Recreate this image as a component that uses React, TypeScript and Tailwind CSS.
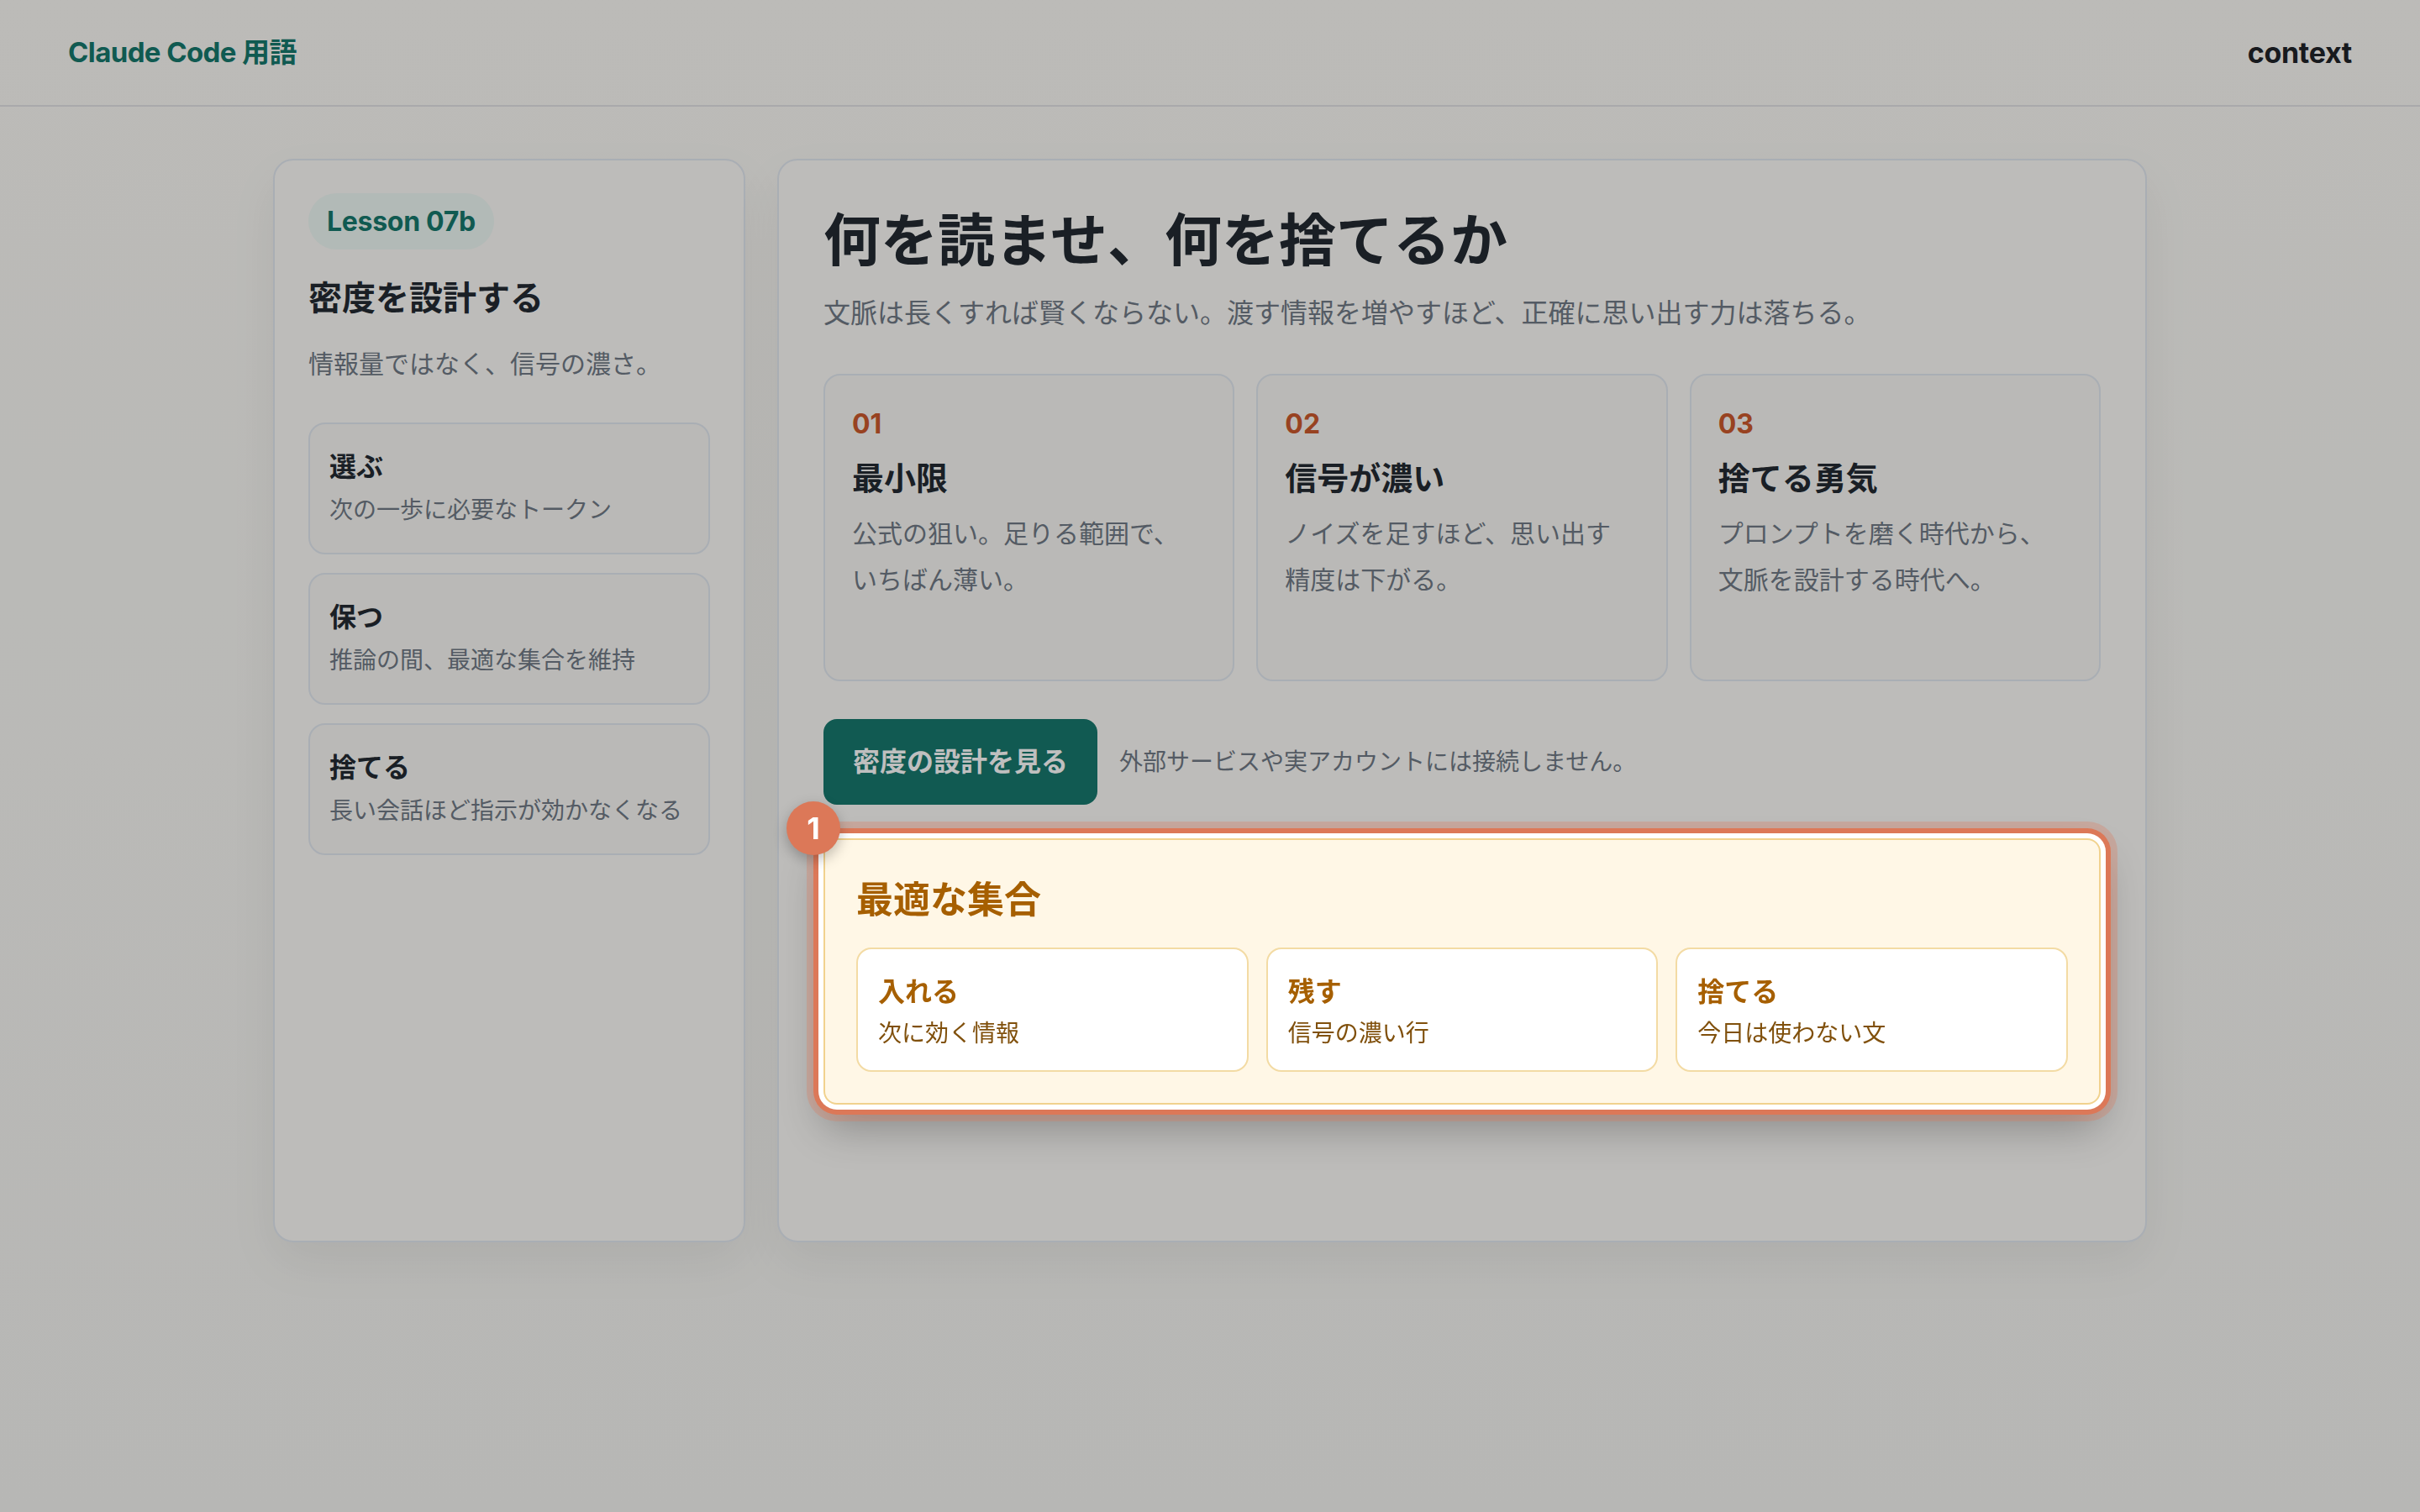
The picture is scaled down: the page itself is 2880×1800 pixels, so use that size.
import React from 'react';

const sideItems = [
  { title: '選ぶ', desc: '次の一歩に必要なトークン' },
  { title: '保つ', desc: '推論の間、最適な集合を維持' },
  { title: '捨てる', desc: '長い会話ほど指示が効かなくなる' },
];

const points = [
  { no: '01', title: '最小限', lines: ['公式の狙い。足りる範囲で、', 'いちばん薄い。'] },
  { no: '02', title: '信号が濃い', lines: ['ノイズを足すほど、思い出す', '精度は下がる。'] },
  { no: '03', title: '捨てる勇気', lines: ['プロンプトを磨く時代から、', '文脈を設計する時代へ。'] },
];

const setItems = [
  { title: '入れる', desc: '次に効く情報' },
  { title: '残す', desc: '信号の濃い行' },
  { title: '捨てる', desc: '今日は使わない文' },
];

function Sidebar() {
  return (
    <aside className="h-[1290px] w-[562px] shrink-0 rounded-[24px] border-2 border-[#e2e8f0] bg-[#fcfbf8] px-[40px] pt-[39px] shadow-[0_24px_60px_rgba(0,0,0,0.06)]">
      <span className="inline-flex h-[67px] items-center rounded-full bg-[#eef8f4] px-[22px] text-[32px] font-bold tracking-[-0.3px] text-[#16786d]">
        Lesson 07b
      </span>
      <h2 className="mt-[30px] text-[40px] font-bold leading-[56px] text-[#232a32]">密度を設計する</h2>
      <p className="mt-[28px] text-[30px] leading-[45px] text-[#707a86]">情報量ではなく、信号の濃さ。</p>
      <div className="mt-[47px] flex flex-col gap-[22px]">
        {sideItems.map((item) => (
          <div
            key={item.title}
            className="rounded-[20px] border-2 border-[#e2e8f0] bg-[#f8f7f4] px-[23px] pb-[30px] pt-[28px]"
          >
            <div className="text-[32px] font-bold leading-[45px] text-[#232a32]">{item.title}</div>
            <div className="mt-[8px] whitespace-nowrap text-[28px] leading-[42px] text-[#707a86]">{item.desc}</div>
          </div>
        ))}
      </div>
    </aside>
  );
}

function OptimalSet() {
  return (
    <div className="relative z-20 mt-[40px] rounded-[16px] border-2 border-[#f1d28e] bg-[#fff7e6] px-[37px] pb-[37px] pt-[41px] shadow-[0_0_0_6px_#ffffff,0_0_0_12px_#dc7858,0_0_0_20px_rgba(220,120,88,0.3),0_26px_50px_rgba(0,0,0,0.28)]">
      <span className="absolute left-[-46px] top-[-46px] flex h-[64px] w-[64px] items-center justify-center rounded-full bg-[#dc7858] text-[36px] font-bold text-white shadow-[0_6px_16px_rgba(0,0,0,0.25)]">
        1
      </span>
      <h3 className="text-[44px] font-bold leading-[60px] text-[#a65f00]">最適な集合</h3>
      <div className="mt-[27px] grid grid-cols-3 gap-[21px]">
        {setItems.map((item) => (
          <div
            key={item.title}
            className="h-[148px] rounded-[18px] border-2 border-[#f3dba4] bg-white px-[24px] pt-[29px]"
          >
            <div className="text-[32px] font-bold leading-[44px] text-[#a65f00]">{item.title}</div>
            <div className="mt-[7px] text-[28px] leading-[40px] text-[#80500c]">{item.desc}</div>
          </div>
        ))}
      </div>
    </div>
  );
}

function MainPanel() {
  return (
    <section className="h-[1290px] flex-1 rounded-[24px] border-2 border-[#e2e8f0] bg-[#fcfbf8] px-[53px] pt-[55px] shadow-[0_24px_60px_rgba(0,0,0,0.06)]">
      <h1 className="text-[68px] font-bold leading-[80px] text-[#232a32]">何を読ませ、何を捨てるか</h1>
      <p className="mt-[23px] text-[32px] leading-[48px] text-[#707a86]">
        文脈は長くすれば賢くならない。渡す情報を増やすほど、正確に思い出す力は落ちる。
      </p>

      <div className="mt-[48px] grid grid-cols-3 gap-[26px]">
        {points.map((p) => (
          <div
            key={p.no}
            className="h-[366px] rounded-[20px] border-2 border-[#e2e8f0] bg-[#f8f7f4] px-[32px] pt-[36px]"
          >
            <div className="text-[32px] font-bold leading-[44px] text-[#cb592c]">{p.no}</div>
            <div className="mt-[16px] text-[38px] font-bold leading-[52px] text-[#232a32]">{p.title}</div>
            <p className="mt-[13px] text-[30px] leading-[55px] text-[#707a86]">
              {p.lines.map((line) => (
                <span key={line} className="block whitespace-nowrap">
                  {line}
                </span>
              ))}
            </p>
          </div>
        ))}
      </div>

      <div className="mt-[45px] flex items-center gap-[26px]">
        <button className="flex h-[102px] items-center rounded-[16px] bg-[#17786e] px-[35px] text-[32px] font-bold text-white">
          密度の設計を見る
        </button>
        <span className="text-[28px] text-[#707a86]">外部サービスや実アカウントには接続しません。</span>
      </div>

      <OptimalSet />
    </section>
  );
}

export default function App() {
  return (
    <div className="relative min-h-screen bg-gradient-to-b from-[#fbfaf6] to-[#f5f5f2] font-['Inter','Noto_Sans_CJK_JP',sans-serif] text-[#232a32]">
      <header className="flex h-[127px] items-center justify-between border-b-2 border-[#e2e2e4] px-[81px]">
        <span className="text-[33px] font-bold tracking-[-0.6px] text-[#16786d]">Claude Code 用語</span>
        <span className="text-[34px] font-bold tracking-[-0.3px] text-[#1f2328]">context</span>
      </header>

      <main className="mx-auto mt-[62px] flex w-[2230px] gap-[38px]">
        <Sidebar />
        <MainPanel />
      </main>

      <div className="pointer-events-none fixed inset-0 z-10 bg-black/25" />
    </div>
  );
}
